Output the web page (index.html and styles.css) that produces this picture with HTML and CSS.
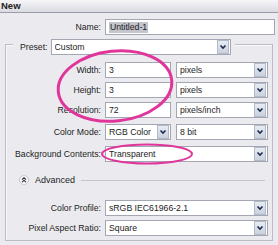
FILE: index.html
```html
<!DOCTYPE html>
<html>
<head>
<meta charset="utf-8">
<link rel="stylesheet" href="styles.css">
</head>
<body>
<div class="window">
  <div class="titlebar">New</div>
  <div class="name-row">
    <span class="lbl name-lbl">Name:</span>
    <div class="field name-field"><span class="selected">Untitled-1</span></div>
  </div>
  <div class="group">
    <div class="group-head">
      <span class="head-lbl">Preset:</span>
      <div class="field select preset"><span class="val">Custom</span><span class="arrow"><svg width="10" height="12" viewBox="0 0 10 12"><path d="M2.5 4.5 L5 7 L7.5 4.5" fill="none" stroke="#1c2c4c" stroke-width="1.6"/></svg></span></div>
    </div>
    <div class="row first">
      <span class="lbl">Width:</span>
      <div class="field short">3</div>
      <div class="field select unit"><span class="val">pixels</span><span class="arrow"><svg width="10" height="12" viewBox="0 0 10 12"><path d="M2.5 4.5 L5 7 L7.5 4.5" fill="none" stroke="#1c2c4c" stroke-width="1.6"/></svg></span></div>
    </div>
    <div class="row">
      <span class="lbl">Height:</span>
      <div class="field short">3</div>
      <div class="field select unit"><span class="val">pixels</span><span class="arrow"><svg width="10" height="12" viewBox="0 0 10 12"><path d="M2.5 4.5 L5 7 L7.5 4.5" fill="none" stroke="#1c2c4c" stroke-width="1.6"/></svg></span></div>
    </div>
    <div class="row">
      <span class="lbl">Resolution:</span>
      <div class="field short">72</div>
      <div class="field select unit"><span class="val">pixels/inch</span><span class="arrow"><svg width="10" height="12" viewBox="0 0 10 12"><path d="M2.5 4.5 L5 7 L7.5 4.5" fill="none" stroke="#1c2c4c" stroke-width="1.6"/></svg></span></div>
    </div>
    <div class="row wide-gap">
      <span class="lbl">Color Mode:</span>
      <div class="field select short"><span class="val">RGB Color</span><span class="arrow"><svg width="10" height="12" viewBox="0 0 10 12"><path d="M2.5 4.5 L5 7 L7.5 4.5" fill="none" stroke="#1c2c4c" stroke-width="1.6"/></svg></span></div>
      <div class="field select unit"><span class="val">8 bit</span><span class="arrow"><svg width="10" height="12" viewBox="0 0 10 12"><path d="M2.5 4.5 L5 7 L7.5 4.5" fill="none" stroke="#1c2c4c" stroke-width="1.6"/></svg></span></div>
    </div>
    <div class="row wide-gap">
      <span class="lbl">Background Contents:</span>
      <div class="field select full"><span class="val">Transparent</span><span class="arrow"><svg width="10" height="12" viewBox="0 0 10 12"><path d="M2.5 4.5 L5 7 L7.5 4.5" fill="none" stroke="#1c2c4c" stroke-width="1.6"/></svg></span></div>
    </div>
    <div class="advanced">
      <svg class="adv-icon" width="10" height="10" viewBox="0 0 10 10"><circle cx="5" cy="5" r="4.5" fill="#f7f7f9" stroke="#c6c6ce"/><path d="M3 4.6 L5 2.8 L7 4.6 M3 7.2 L5 5.4 L7 7.2" fill="none" stroke="#2a2a36" stroke-width="1.1"/></svg>
      <span class="adv-text">Advanced</span>
      <span class="adv-line"></span>
    </div>
    <div class="row after-adv">
      <span class="lbl">Color Profile:</span>
      <div class="field select full"><span class="val">sRGB IEC61966-2.1</span><span class="arrow"><svg width="10" height="12" viewBox="0 0 10 12"><path d="M2.5 4.5 L5 7 L7.5 4.5" fill="none" stroke="#1c2c4c" stroke-width="1.6"/></svg></span></div>
    </div>
    <div class="row">
      <span class="lbl">Pixel Aspect Ratio:</span>
      <div class="field select full"><span class="val">Square</span><span class="arrow"><svg width="10" height="12" viewBox="0 0 10 12"><path d="M2.5 4.5 L5 7 L7.5 4.5" fill="none" stroke="#1c2c4c" stroke-width="1.6"/></svg></span></div>
    </div>
  </div>
  <svg class="marks" width="278" height="245" viewBox="0 0 278 245">
    <ellipse cx="115" cy="86" rx="57" ry="35" transform="rotate(-6 115 86)" fill="none" stroke="#e0369b" stroke-width="3"/>
    <ellipse cx="147" cy="154" rx="45" ry="9.5" fill="none" stroke="#e0369b" stroke-width="2"/>
  </svg>
</div>
</body>
</html>
```

FILE: styles.css
```css
html, body {
  margin: 0;
  padding: 0;
}
body {
  background: #ebebef;
  font-family: "Liberation Sans", Arial, sans-serif;
  font-size: 8.7px;
  color: #1c1c1c;
}
.window {
  position: relative;
  width: 278px;
  height: 245px;
  overflow: hidden;
}
.titlebar {
  height: 12px;
  line-height: 12px;
  padding-left: 1px;
  font-weight: bold;
  font-size: 9.5px;
  color: #222;
  background: linear-gradient(#f6f6f9, #dadae2);
  border-bottom: 1px solid #9c9ca8;
}
.name-row {
  display: flex;
  align-items: center;
  margin-top: 6px;
}
.lbl {
  text-align: right;
  white-space: nowrap;
  flex: none;
}
.name-lbl {
  width: 101px;
  margin-right: 4px;
}
.field {
  box-sizing: border-box;
  height: 16px;
  background: #fff;
  border: 1px solid #a2a7b2;
  display: flex;
  align-items: center;
  padding-left: 3px;
  white-space: nowrap;
  flex: none;
}
.name-field {
  width: 170px;
}
.selected {
  background: #c4c4cc;
  padding: 0 1px;
  line-height: 11px;
}
.select {
  padding-right: 1px;
}
.select .val {
  flex: 1;
  overflow: hidden;
}
.arrow {
  box-sizing: border-box;
  width: 12px;
  height: 14px;
  flex: none;
  background: linear-gradient(#e8ecf3, #c9d1de);
  border: 1px solid #b2bac8;
  display: flex;
  align-items: center;
  justify-content: center;
}
.group {
  margin: 9px 5px 0 5px;
  border: 1px solid #bcbcc4;
  box-shadow: inset 1px 1px 0 #fafafc;
  padding-bottom: 4px;
}
.group-head {
  display: flex;
  align-items: center;
  width: fit-content;
  margin: -6px 0 0 7px;
  padding: 0 4px 0 7px;
  background: #ebebef;
}
.head-lbl {
  margin-right: 3px;
}
.preset {
  width: 180px;
}
.row {
  display: flex;
  align-items: center;
  margin-top: 4px;
}
.row .lbl {
  width: 95px;
  margin-right: 4px;
}
.row.first {
  margin-top: 7px;
}
.row.wide-gap {
  margin-top: 6px;
}
.row.after-adv {
  margin-top: 13px;
}
.short {
  width: 66px;
  margin-right: 5px;
}
.unit {
  width: 92px;
}
.full {
  width: 163px;
}
.advanced {
  display: flex;
  align-items: center;
  height: 14px;
  margin-top: 11px;
  padding-left: 13px;
}
.adv-icon {
  flex: none;
}
.adv-text {
  margin-left: 6px;
  font-size: 9px;
}
.adv-line {
  width: 184px;
  height: 1px;
  margin-left: 6px;
  background: #c4c4cc;
}
.marks {
  position: absolute;
  left: 0;
  top: 0;
  pointer-events: none;
}
```
